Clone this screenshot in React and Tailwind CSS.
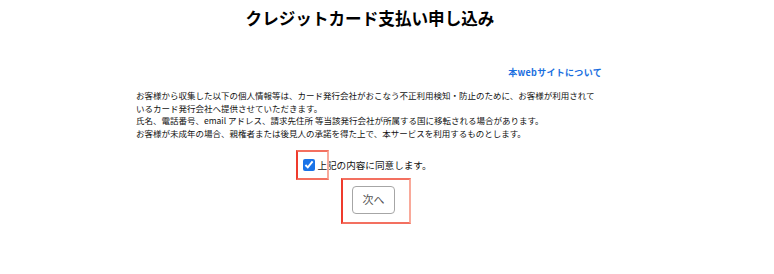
import { useState } from "react";

const App = () => {
  const [agreed, setAgreed] = useState(true);

  return (
    <div
      className="w-[740px] min-h-[274px] bg-white flex flex-col items-center text-[#111]"
      style={{ fontFamily: '"Noto Sans CJK JP", "Noto Sans", sans-serif' }}
    >
      {/* Title */}
      <h1 className="mt-[6px] text-[16.6px] leading-[24px] font-bold text-black">
        クレジットカード支払い申し込み
      </h1>

      <div className="w-[468px] mt-[36px]">
        {/* Link */}
        <div className="flex justify-end pr-[2px]">
          <a href="#" className="text-[9px] leading-[13px] font-semibold text-[#1a6fe0] tracking-[0.3px]">
            本webサイトについて
          </a>
        </div>

        {/* Notice */}
        <p className="mt-[10px] w-[464px] text-[8.5px] leading-[12.6px]">
          お客様から収集した以下の個人情報等は、カード発行会社がおこなう不正利用検知・防止のために、お客様が利用されているカード発行会社へ提供させていただきます。
          <br />
          氏名、電話番号、email アドレス、請求先住所 等当該発行会社が所属する国に移転される場合があります。
          <br />
          お客様が未成年の場合、親権者または後見人の承諾を得た上で、本サービスを利用するものとします。
        </p>
      </div>

      {/* Agreement */}
      <label className="mt-[19px] ml-[-5px] flex items-center gap-[2px] text-[9.6px] leading-[14px] cursor-pointer">
        <span className="relative flex">
          <input
            type="checkbox"
            checked={agreed}
            onChange={(e) => setAgreed(e.target.checked)}
            className="w-[12px] h-[12px] m-0 accent-[#1a73e8]"
          />
          <span className="absolute left-[-7px] top-[-9px] w-[33px] h-[30px] border-2 border-[#ef3b2d] border-r-[#f9a99a] border-t-[#f37060] border-b-[#f37060] pointer-events-none" />
        </span>
        上記の内容に同意します。
      </label>

      {/* Next button */}
      <div className="relative mt-[13px] ml-[7px]">
        <button className="w-[43px] h-[28px] border border-[#a6a6a6] rounded-[4px] bg-white text-[11px] text-[#555]">
          次へ
        </button>
        <span className="absolute left-[-11px] top-[-7px] w-[70px] h-[46px] border-2 border-[#ef3b2d] border-r-[#f9a99a] border-t-[#f37060] border-b-[#f37060] pointer-events-none" />
      </div>
    </div>
  );
};

export default App;
